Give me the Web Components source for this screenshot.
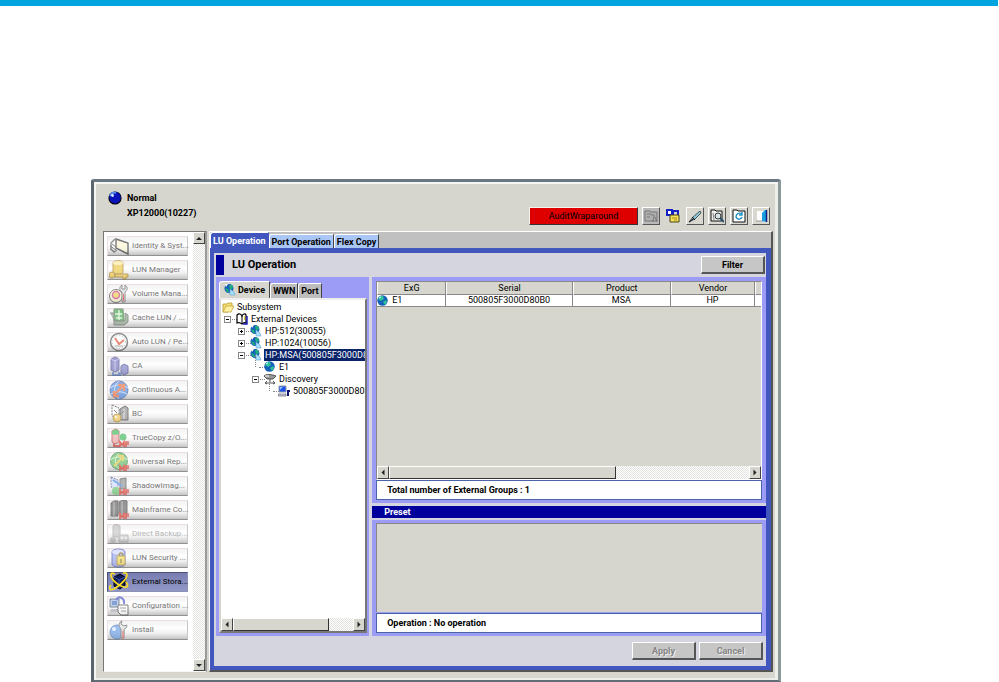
<!DOCTYPE html>
<html lang="en">
<head>
<meta charset="utf-8">
<title>XP12000 - LU Operation</title>
<style>
html{height:100%}
body{margin:0;min-height:100%;display:flex;flex-direction:column;background:#fff;font:9px/12px Roboto,"Liberation Sans",sans-serif;color:#000}
.rule{height:6px;background:#00a4de;margin-right:1px}
app-window{flex:1;margin:173px 218px 0 91px}
</style>
</head>
<body>
<div class="rule"></div>
<app-window>
  <status-header slot="header" state="Normal" device="XP12000(10227)"></status-header>
  <nav-list slot="nav"></nav-list>
  <lu-workspace></lu-workspace>
</app-window>
<script>
const define = (name, html, setup) => {
  const t = document.createElement('template');
  t.innerHTML = html;
  customElements.define(name, class extends HTMLElement {
    constructor(){ super(); this.attachShadow({mode:'open'}).append(t.content.cloneNode(true)); }
    connectedCallback(){ if(!this.ready){ this.ready = true; if(setup) setup.call(this, this.shadowRoot); } }
  });
};

const mf = '<path d="M11 19v-5l2 3 2-3v5M17 19v-5h3M17 16h3" stroke="#e02418" stroke-width="1.6" fill="none"/>';
const globe = '<circle cx="5.5" cy="5.5" r="5.2" fill="#1560b8"/><path d="M3 1 6 1 7 4 4 6 1 4zM6 7l3-2 1 2-2 3z" fill="#2cc49a"/><path d="M2 3l2-1" stroke="#d8f4ff"/>';
const shape = {
  identify:[20,'<path d="M7 3l12 4v11L7 12z" fill="#fff6cf" stroke="#222" stroke-width="1.4"/><path d="M6 3L2 7v6l3 3 3-2" fill="none" stroke="#555" stroke-width="1.5"/><path d="M1 10l6 4M1 13l5 3M3 8l4 3" stroke="#333"/>'],
  lun:[20,'<path d="M4 3c0-3 10-3 10 0v9c0 3-10 3-10 0z" fill="#ecc233" stroke="#a87b10"/><ellipse cx="9" cy="3" rx="5" ry="2" fill="#fff09b"/><circle cx="3" cy="15" r="3" fill="#f0c433" stroke="#9b7310"/><path d="M6 14h13v3h-2v2h-3v-2H6z" fill="#f0c433" stroke="#9b7310"/>'],
  volume:[20,'<circle cx="7" cy="12" r="6.5" fill="#f8f2cd" stroke="#333"/><circle cx="7" cy="11" r="3.5" fill="#f0ce3b" stroke="#c32f79" stroke-width="1.5"/><path d="M13 1v4h3V1c3 2 3 5 0 7v10h-3V8c-3-2-3-5 0-7z" fill="#d9d9df" stroke="#555"/><path d="M14.5 10v7" stroke="#e22"/>'],
  cache:[20,'<path d="M5 1h9l1 12H5z" fill="#2f9c3c" stroke="#3b6c38"/><path d="M1 5h4v12h10l4-3V7l-3-2v8H5" fill="#7c9c7a" stroke="#555"/><path d="M6 6h7M7 10h6M10 2v10" stroke="#d6f4d0" stroke-width="1.4" fill="none"/>'],
  auto:[20,'<circle cx="10" cy="10" r="8.5" fill="#fff" stroke="#444" stroke-width="1.5"/><circle cx="10" cy="10" r="6.5" fill="none" stroke="#999" stroke-dasharray="1 2"/><path d="M6 6l4 6 5-4" stroke="#d42" stroke-width="2" fill="none"/><path d="M6 14h8" stroke="#888"/>'],
  ca:[20,'<path d="M2 3l4-2 4 2v11l-4 2-4-2z" fill="#6868b9" stroke="#3d3d8a"/><path d="M2 3l4 2 4-2M6 5v10" stroke="#b9b9ee" fill="none"/><path d="M12 10l3-2 4 2v7l-4 2-3-2z" fill="#7878c5" stroke="#3d3d8a"/><path d="M4 16v3h8M9 16l3 3" stroke="#3560bd" stroke-width="1.6" fill="none"/>'],
  continuous:[20,'<circle cx="10" cy="10" r="9" fill="#3f7edc" stroke="#2b4e9f"/><path d="M1 8c5-4 13-4 18 0M2 14c5-3 11-3 16 0M10 1c-6 5-6 12 0 18" stroke="#bdd8ff" fill="none"/><path d="M5 15L14 6M9 5h6v6M5 11v5h5" stroke="#e8642c" stroke-width="2.4" fill="none"/>'],
  bc:[20,'<path d="M3 1l7 3v11l-7-3z" fill="#fff" stroke="#333" stroke-dasharray="2 1"/><path d="M11 5l5-3 3 2v12h-8z" fill="#888" stroke="#333"/><path d="M15 5v10" stroke="#ddd"/><path d="M9 13l6-6M5 6l3 3" stroke="#444"/><circle cx="8" cy="14" r="4" fill="#f3c54b" stroke="#a77b1a"/><circle cx="7" cy="13" r="1.3" fill="#fff3c0"/>'],
  truecopy:[20,'<path d="M3 3l4-2 3 2v11l-4 2-3-2z" fill="#ee9d9d" stroke="#a33"/><path d="M3 3l4-2 3 2v3l-4 1-3-1z" fill="#2fb34c"/><circle cx="14" cy="9" r="3.5" fill="#2fb34c"/><path d="M5 15v3h6" stroke="#c33" stroke-width="2" fill="none"/>'+mf],
  universal:[20,'<circle cx="10" cy="9" r="8.5" fill="#56b75b" stroke="#2f7e3a"/><path d="M1 8c5-4 13-4 18 0M10 1c-5 5-5 12 0 16" stroke="#c8efbd" fill="none"/><path d="M5 14l9-9M9 4h5v5" stroke="#e0c43c" stroke-width="2" fill="none"/>'+mf],
  shadow:[20,'<path d="M2 1l7 3v10l-7-3z" fill="#c8d8ff" stroke="#446" stroke-dasharray="2 1"/><path d="M11 3l6-1v11h-6z" fill="#888" stroke="#444"/><path d="M4 4l9 6" stroke="#367bdd" stroke-width="2"/><circle cx="7" cy="15" r="4" fill="#62c46b"/>'+mf],
  mainframe:[20,'<path d="M2 3l3-2h4v15H2zM10 2l4-2 4 1v13h-8z" fill="#555" stroke="#333"/><path d="M5 2v14M13 1v14" stroke="#aaa"/>'+mf],
  backup:[20,'<path d="M4 2l3-2 4 2v11H4z" fill="#888" stroke="#444"/><circle cx="4" cy="16" r="3" fill="#777"/><path d="M10 11h9v7h-9z" fill="#999" stroke="#555"/><circle cx="13" cy="14" r="1.5" fill="#eee"/><circle cx="17" cy="14" r="1.5" fill="#eee"/>'],
  security:[20,'<path d="M3 4c0-4 13-4 13 0v12c0 4-13 4-13 0z" fill="#8d9bea" stroke="#3f4fb0"/><ellipse cx="9" cy="4" rx="6" ry="2.5" fill="#cfd6ff"/><path d="M8 8h8v9H8z" fill="#f2d54a" stroke="#9b7e18"/><path d="M10 8c0-4 4-4 4 0M12 11v4" stroke="#7b6618" stroke-width="1.4" fill="none"/>'],
  external:[20,'<path d="M5 5l6-3 5 3v8l-5 4-6-3z" fill="#101a55" stroke="#000"/><path d="M5 5l5 3 6-3M10 8v8" stroke="#3c58b0" fill="none"/><path d="M3 1c-4 3 4 12 12 14 5 1 4-2 2-5M17 1c4 3-5 12-12 16-5 2-5-1-3-4M3 1l3 1M17 1h-3" stroke="#ffdf20" stroke-width="1.6" fill="none"/>'],
  config:[20,'<path d="M1 3h9v8H1z" fill="#9db4e6" stroke="#345"/><path d="M3 5h5v4H3z" fill="#36b"/><path d="M2 13h8l1 3H1z" fill="#aab"/><path d="M7 4c3-5 9-2 8 4" stroke="#3546c7" stroke-width="2" fill="none"/><path d="M9 9h10v10h-7l-3-3z" fill="#fff" stroke="#333"/><path d="M11 12h6M12 15h5" stroke="#777"/>'],
  install:[20,'<circle cx="8" cy="12" r="7" fill="#5d95e4" stroke="#3666b0"/><circle cx="5" cy="9" r="2" fill="#d9eaff"/><path d="M13 1l-1 3 3 2 3-1c0 3-2 4-3 4v9h-3v-9c-3-3-2-7 1-8z" fill="#ddd" stroke="#555"/><path d="M14 11v8" stroke="#d54" stroke-width="1.5"/>'],
  ball:[14,'<circle cx="7" cy="7" r="6.6" fill="#000"/><circle cx="7" cy="6.6" r="5.8" fill="#0a14b8"/><path d="M2 5c1-3 4-4 6-3" stroke="#5b8cf0" stroke-width="2" fill="none"/><circle cx="4.5" cy="4.5" r="1.4" fill="#d8f0ff"/>'],
  globe:[12,globe],
  globelink:[12,'<circle cx="5" cy="4.5" r="4.5" fill="#1560b8"/><path d="M5 1l3 0 1 3-3 2zM1 4l3 1 1 3-2 0z" fill="#1fae7c"/><path d="M1 0h3L2 3z" fill="#fff"/><path d="M6 5l4 3 1 3H6z" fill="#a9dfff" stroke="#5fa4cc" stroke-width=".6"/>'],
  folder:[12,'<path d="M1 3h4l1-1h4v3L6 11H1z" fill="#f6df72" stroke="#b59a36" stroke-width=".8"/><path d="M1 11l3-6h8l-3 6z" fill="#ffefa2" stroke="#c2a33b" stroke-width=".8"/>'],
  book:[12,'<path d="M1 2c2-2 4-1 5 1 1-2 3-3 4-1v8c-2-1-3 0-4 1-1-1-3-2-5-1z" fill="#fff" stroke="#000" stroke-width="1.2"/><path d="M6 3v7" stroke="#000"/><path d="M11 3v8H7" stroke="#1414b4" stroke-width="1.4" fill="none"/><path d="M8 3h1v4H8z" fill="#e6d447"/>'],
  discovery:[12,'<path d="M0 3c2-2 7-2 12 0L9 6H3z" fill="#999" stroke="#333" stroke-width=".8"/><path d="M1 3h4" stroke="#fff"/><path d="M6 6v3M1 10h10M3 8l-2 2 2 1M9 8l2 2-2 1" stroke="#555" fill="none"/>'],
  pc:[12,'<path d="M1 1h7v6H1z" fill="#1d50e8" stroke="#99a"/><path d="M2 2h3L2 5z" fill="#8fc0ff"/><path d="M0 9h8v2H0z" fill="#ccd" stroke="#667" stroke-width=".7"/><path d="M10 11V6h2" stroke="#0a1170" stroke-width="2" fill="none"/>'],
  viewoff:[14,'<path d="M1 2h5l1 1h6v9H1z" fill="#b0b0b0" stroke="#777"/><path d="M3 5h4M3 8h3M7 6h3v3l-1 1v3M11 8l2 5" stroke="#777" fill="none"/>'],
  lock:[14,'<path d="M1 1h5v5H1z" fill="#fff" stroke="#1422c4" stroke-width="2"/><path d="M7 6V2h5v5" stroke="#1422c4" stroke-width="2" fill="none"/><path d="M4 6h9v7H4z" fill="#f4e25d" stroke="#4a4310"/><path d="M6 9h5M8 11h3" stroke="#a58a1a"/>'],
  pen:[14,'<path d="M1 13l4-5 7-6 1 2-6 6z" fill="#8cc9dc" stroke="#333" stroke-width=".8"/><path d="M1 13l4-3M4 8l3 3" stroke="#111"/>'],
  search:[14,'<path d="M1 1h4l1 1h6v10H1z" fill="#eee" stroke="#111"/><path d="M3 4l1 7" stroke="#888"/><circle cx="8" cy="7" r="3" fill="#d8e4e6" stroke="#333"/><path d="M10 9l4 4" stroke="#27506f" stroke-width="2"/>'],
  refresh:[14,'<path d="M1 1h4l1 1h7v11H1z" fill="#fff" stroke="#111"/><path d="M10 5C7 3 4 5 4 8c1 3 5 3 6 0M10 3v3H7" stroke="#2492c7" stroke-width="1.4" fill="none"/>'],
  exit:[14,'<path d="M3 2h7v10H3z" fill="#fff"/><path d="M2 12h7" stroke="#999"/><path d="M8 4l3-3h2v12l-5-1z" fill="#17a0e0"/><path d="M12.5 1v12" stroke="#102080" stroke-width="1.5"/>']
};

define('scroll-bar', `<style>
:host{display:flex;flex:none;width:12px;flex-direction:column;background:repeating-conic-gradient(#e2e2de 0 25%,#fff 0 50%) 0 0/2px 2px}
:host([horizontal]){width:auto;height:13px;flex-direction:row}
button{all:unset;box-sizing:border-box;flex:none;width:12px;height:12px;background:#d6d6ce;border:1px solid;border-color:#fff #444 #444 #fff;display:grid;place-items:center}
:host([horizontal]) button{height:13px}
i{display:block;border:3px solid transparent;border-bottom-color:#222;border-top:0}
.end i{transform:rotate(180deg)}
:host([horizontal]) i{transform:rotate(-90deg)}
:host([horizontal]) .end i{transform:rotate(90deg)}
.track{flex:1}.thumb{display:none}
:host([horizontal]) .thumb{display:block;box-sizing:border-box;width:var(--thumb,60%);height:100%;background:#d6d6ce;border:1px solid;border-color:#fff #333 #333 #fff}
</style><button aria-label="Scroll back"><i></i></button><div class="track"><div class="thumb"></div></div><button class="end" aria-label="Scroll forward"><i></i></button>`);

define('app-window', `<style>
:host{display:flex;flex-direction:column;box-sizing:border-box;background:#d6d6ce;border:solid;border-width:3px 3px 2px;border-color:#697782 #8c9999 #626d76 #59646c;border-radius:3px 3px 0 0;padding:5px 5px 8px 9px;box-shadow:inset 2px 2px #f5f5f3,inset -3px -2px #eceee9}
.body{flex:1;display:grid;grid-template-columns:104px minmax(0,1fr);column-gap:2px}
</style><slot name="header"></slot><div class="body"><slot name="nav"></slot><slot></slot></div>`);

define('tool-button', `<style>:host{display:block}
button{all:unset;box-sizing:border-box;display:grid;place-items:center;width:18px;height:18px;background:#d8d8d0;border:1px solid;border-color:#fff #555 #555 #fff}
:host([flat]) button{border-color:transparent}:host([off]) button{background:#b9b9b9}
</style><button><ui-icon></ui-icon></button>`, function(r){
  r.querySelector('ui-icon').setAttribute('name',this.getAttribute('icon'));
  r.querySelector('button').setAttribute('aria-label',this.getAttribute('label'));
});
define('status-header', `<style>
:host{display:flex;justify-content:space-between;height:44px}
.id{display:grid;grid-template-columns:14px auto;column-gap:5px;align-content:start;padding:4px 0 0 5px;font-weight:bold}
.id span{line-height:15px}.dev{grid-column:2}
.tools{display:flex;align-items:center;padding:18px 3px 0 0;gap:4px;height:22px}
.alert{all:unset;box-sizing:border-box;width:109px;height:18px;text-align:center;line-height:16px;background:#de0000;border:1px solid;border-color:#f3f3ee #333 #333 #f3f3ee}
</style><div class="id"><ui-icon name="ball"></ui-icon><span class="state"></span><span class="dev"></span></div>
<div class="tools"><button class="alert">AuditWraparound</button><tool-button icon="viewoff" label="Change mode" off></tool-button><tool-button icon="lock" label="Lock" flat></tool-button><tool-button icon="pen" label="Edit"></tool-button><tool-button icon="search" label="Find"></tool-button><tool-button icon="refresh" label="Refresh"></tool-button><tool-button icon="exit" label="Exit"></tool-button></div>`, function(r){
  r.querySelector('.state').textContent=this.getAttribute('state');
  r.querySelector('.dev').textContent=this.getAttribute('device');
});

define('nav-item', `<style>:host{display:block}
button{all:unset;box-sizing:border-box;display:flex;align-items:center;width:100%;height:20px;padding-left:1px;gap:3px;border:1px solid;border-color:#eadfe2 #c8c8c8 #919191 #eadfe2;background:linear-gradient(#f3f1f2,#fff 40%,#eee 70%,#c4c4c4);font-size:8px;color:#777;white-space:nowrap}
ui-icon{opacity:.6;margin:-1px 0}
:host([off]) ui-icon{opacity:.3}:host([off]) button{color:#b5b5b5}
:host([selected]) button{background:linear-gradient(#777eb0,#9298c6);color:#000;border-color:#4e527a #8b90b5 #8b90b5 #4e527a}
:host([selected]) ui-icon{opacity:1}
</style><button><ui-icon></ui-icon><slot></slot></button>`, function(r){ r.querySelector('ui-icon').setAttribute('name',this.getAttribute('icon')); });

define('nav-list', `<style>
:host{display:flex;justify-content:space-between;box-sizing:border-box;background:#fff;border:solid;border-width:1px 2px 1px 1px;border-color:#777 #999 #f8f8f8 #777}
nav{width:81px;padding:4px 0 0 3px;display:flex;flex-direction:column;gap:4px}
</style><nav aria-label="Functions">
<nav-item icon="identify">Identity &amp; Syst...</nav-item><nav-item icon="lun">LUN Manager</nav-item><nav-item icon="volume">Volume Mana...</nav-item><nav-item icon="cache">Cache LUN / ...</nav-item><nav-item icon="auto">Auto LUN / Pe...</nav-item><nav-item icon="ca">CA</nav-item><nav-item icon="continuous">Continuous A...</nav-item><nav-item icon="bc">BC</nav-item><nav-item icon="truecopy">TrueCopy z/O...</nav-item><nav-item icon="universal">Universal Rep...</nav-item><nav-item icon="shadow">ShadowImag...</nav-item><nav-item icon="mainframe">Mainframe Co...</nav-item><nav-item icon="backup" off>Direct Backup...</nav-item><nav-item icon="security">LUN Security ...</nav-item><nav-item icon="external" selected>External Stora...</nav-item><nav-item icon="config">Configuration ...</nav-item><nav-item icon="install">Install</nav-item></nav><scroll-bar></scroll-bar>`);

define('tab-button', `<style>
:host{display:block}
button{all:unset;box-sizing:border-box;display:flex;align-items:center;gap:2px;height:14px;padding:0 2px;font-weight:bold;white-space:nowrap;background:#a9c6f4;border:solid #fff;border-width:1px 1px 0;border-right:1px solid #444;border-radius:3px 0 0}
:host([active]) button{height:16px;background:#4157bd;color:#fff;border-right-color:#4157bd}
:host([gray]) button{height:15px;background:#bdbdbd}
:host([gray][active]) button{height:17px;background:#d6d6ce;color:#000;padding:0 4px;border-right-color:#444}
</style><button role="tab"><slot name="icon"></slot><slot></slot></button>`, function(r){ r.querySelector('button').setAttribute('aria-selected',this.hasAttribute('active')); });

define('push-button', `<style>:host{display:block}
button{all:unset;box-sizing:border-box;width:64px;height:18px;text-align:center;font-weight:bold;line-height:16px;background:#c6c6c6;border:solid;border-width:1px 2px 2px 1px;border-color:#fff #555 #555 #fff}
button:disabled{color:#858585;text-shadow:1px 1px #eee}
</style><button><slot></slot></button>`, function(r){ r.querySelector('button').disabled=this.hasAttribute('disabled'); });

define('tree-row', `<style>
:host{display:flex;align-items:center;height:12px;white-space:nowrap;padding-left:calc(var(--level,0)*14px)}
b{box-sizing:border-box;width:7px;height:7px;margin:0 1px 0 2px;border:1px solid #888;background:linear-gradient(#000,#000) center/3px 1px no-repeat #fff;flex:none}
:host([closed]) b{background:linear-gradient(#000,#000) center/3px 1px no-repeat,linear-gradient(#000,#000) center/1px 3px no-repeat,#fff}
u{flex:none;width:5px;margin-right:-1px;border-top:1px dotted #888}
:host([leaf]) b{width:4px;height:12px;margin:-6px 0 6px 5px;border:0;border-left:1px dotted #888;background:none}
:host([leaf]) u{width:6px}
:host([root]) b,:host([root]) u{display:none}
span{padding:0 0 0 1px;margin-left:2px;flex:1}:host([selected]) span{background:#0a246a;color:#fff}
</style><b></b><u></u><ui-icon></ui-icon><span><slot></slot></span>`, function(r){
  this.style.setProperty('--level',this.getAttribute('level')||0); r.querySelector('ui-icon').setAttribute('name',this.getAttribute('icon'));
});
define('device-pane', `<style>
:host{display:flex;flex-direction:column;box-sizing:border-box;background:#9c9cf7;padding:4px 2px 3px 3px;min-width:0}
.tabs{display:flex;align-items:flex-end;height:17px}
.box{flex:1;display:flex;flex-direction:column;background:#fff;border:solid;border-width:2px;border-color:#eee #777 #777 #d6d6ce}
.tree{flex:1;padding:1px 1px 0 1px;min-width:0;overflow:hidden}
scroll-bar{--thumb:80%}
</style><div class="tabs" role="tablist"><tab-button gray active><ui-icon slot="icon" name="globelink"></ui-icon>Device</tab-button><tab-button gray>WWN</tab-button><tab-button gray>Port</tab-button></div>
<div class="box"><div class="tree"><tree-row root icon="folder">Subsystem</tree-row><tree-row icon="book">External Devices</tree-row><tree-row level="1" closed icon="globelink">HP:512(30055)</tree-row><tree-row level="1" closed icon="globelink">HP:1024(10056)</tree-row><tree-row level="1" selected icon="globelink">HP:MSA(500805F3000D8</tree-row><tree-row level="2" leaf icon="globe">E1</tree-row><tree-row level="2" icon="discovery">Discovery</tree-row><tree-row level="3" leaf icon="pc">500805F3000D80B</tree-row></div><scroll-bar horizontal></scroll-bar></div>`);

define('info-line', `<style>:host{display:block;box-sizing:border-box;height:20px;background:#fff;border:1px solid #4964a7;padding-left:10px;font-weight:bold;line-height:18px}</style><slot></slot>`);
define('group-pane', `<style>
:host{display:flex;flex-direction:column;box-sizing:border-box;background:#d5d5df;min-width:0}
.top,.bottom{display:flex;flex-direction:column;background:#9c9cf7;padding:4px 4px 3px 4px}
.top{flex:1}.bottom{padding-top:3px;flex:none}
.grid{flex:1;display:flex;flex-direction:column;background:#d6d6ce;border:1px solid;border-color:#888 #fff #fff #888}
table{width:100%;table-layout:fixed;border-collapse:separate;border-spacing:0}
th,td{box-sizing:border-box;font-weight:normal;text-align:center;padding:0;height:12px;line-height:11px;border:0 solid #888;border-right:1px solid #888}
th{height:13px;line-height:12px;border-bottom-width:1px;border-left:1px solid #fff}
td{background:#fff;border-bottom-width:1px}
td:first-child{text-align:left}
td div{display:flex;gap:3px;align-items:center;height:11px}
th:last-child,td:last-child{border-right:0}
.space{flex:1}.preset{background:#00009c;color:#fff;font-weight:bold;line-height:12px;margin:3px 0 2px;padding-left:12px}
.empty{height:88px;background:#d6d6ce;border-top:1px solid #888;border-left:1px solid #888;margin-bottom:1px}
scroll-bar{--thumb:63%}
</style><div class="top"><div class="grid"><table><colgroup><col style="width:18%"><col style="width:33%"><col style="width:25.5%"><col style="width:22%"><col></colgroup><thead><tr><th>ExG</th><th>Serial</th><th>Product</th><th>Vendor</th><th></th></tr></thead><tbody><tr><td><div><ui-icon name="globe"></ui-icon>E1</div></td><td>500805F3000D80B0</td><td>MSA</td><td>HP</td><td></td></tr></tbody></table><div class="space"></div><scroll-bar horizontal></scroll-bar></div><info-line>Total number of External Groups : 1</info-line></div><div class="preset">Preset</div><div class="bottom"><div class="empty"></div><info-line>Operation : No operation</info-line></div>`);

define('lu-workspace', `<style>
:host{display:flex;flex-direction:column;box-sizing:border-box;border:solid;border-width:1px 2px 2px 1px;border-color:#fff #555 #555 #fff;background:#c0c0c0}
.tabs{display:flex;align-items:flex-end;height:16px}
.panel{flex:1;display:flex;flex-direction:column;background:#d5d5df;border:solid #4157bd;border-width:5px 5px 4px 4px}
header{display:flex;align-items:center;justify-content:space-between;height:24px;padding:0 1px 0 2px}
h1{margin:0;display:flex;align-items:center;gap:8px;font-size:11px;line-height:20px}
h1::before{content:"";width:8px;height:20px;background:#00009c}
.content{flex:1;display:grid;grid-template-columns:minmax(0,28fr) minmax(0,72fr);column-gap:3px;padding:0 0 0 2px;background:linear-gradient(#666,#666) 28% 0/1px 100% no-repeat}
footer{display:flex;justify-content:flex-end;gap:3px;padding:6px 3px 6px 0}
</style><div class="tabs" role="tablist"><tab-button active>LU Operation</tab-button><tab-button>Port Operation</tab-button><tab-button>Flex Copy</tab-button></div>
<div class="panel"><header><h1>LU Operation</h1><push-button>Filter</push-button></header><div class="content"><device-pane></device-pane><group-pane></group-pane></div><footer><push-button disabled>Apply</push-button><push-button disabled>Cancel</push-button></footer></div>`);

// Defined last: the elements above have named their icons by the time these upgrade.
define('ui-icon', `<style>:host{display:block;flex:none}svg{display:block}</style><svg></svg>`, function(r){
  const [s,p] = shape[this.getAttribute('name')], svg = r.querySelector('svg');
  svg.setAttribute('viewBox',`0 0 ${s} ${s}`); svg.setAttribute('width',s); svg.setAttribute('height',s);
  svg.setAttribute('aria-hidden','true'); svg.innerHTML = p;
});
</script>
</body>
</html>
